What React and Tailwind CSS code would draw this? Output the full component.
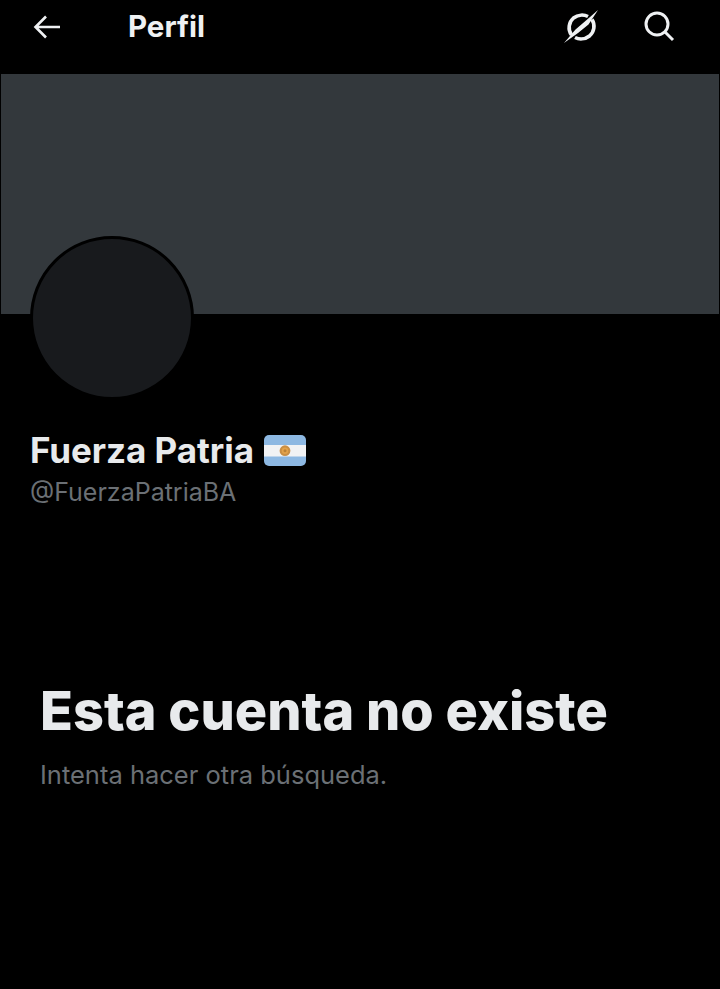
import React from "react";

const Flag = () => (
  <svg width="42" height="31" viewBox="0 0 42 31" className="block">
    <rect x="0" y="0" width="42" height="31" rx="5" fill="#8db8e2" />
    <rect x="0" y="10" width="42" height="11.5" fill="#f1f2f4" />
    <circle cx="21" cy="15.7" r="5.4" fill="#c98f45" />
    <circle cx="21" cy="15.7" r="3.2" fill="#e3a24a" />
    <circle cx="21" cy="15.7" r="1.5" fill="#bb8238" />
  </svg>
);

const App = () => {
  return (
    <div className="w-[720px] h-[989px] bg-black overflow-hidden font-['Inter',sans-serif]">
      <header className="h-[74px] flex items-start text-[#eff1f3]">
        <svg width="30" height="30" viewBox="0 0 30 30" className="ml-[32px] mt-[12px]" fill="none" stroke="currentColor" strokeWidth="2.6">
          <path d="M28 15H4M14 4.5 3.5 15 14 25.5" />
        </svg>
        <h1 className="ml-[66px] mt-[9px] text-[29.5px] leading-[34px] font-bold">Perfil</h1>
        <div className="ml-auto flex items-start">
          <svg width="36" height="36" viewBox="0 0 36 36" className="mt-[9px] mr-[43px]" fill="none" stroke="currentColor">
            <path d="M7.5 26C3.5 20.5 4.8 13 9.5 9 14 5.5 20 5.5 24 7.5" strokeWidth="3.6" />
            <path d="M28 10.5C31.5 16 30.2 23 25.5 27 21 30.5 15 30.5 11 28.5" strokeWidth="3.6" />
            <path d="M34 1 24.5 15.5 14 24 0 34 11.5 20.5 22 11.5Z" fill="currentColor" stroke="none" />
          </svg>
          <svg width="32" height="32" viewBox="0 0 32 32" className="mt-[10px] mr-[45px]" fill="none" stroke="currentColor" strokeWidth="3">
            <circle cx="14" cy="14" r="11" />
            <path d="m22 22 8 8" />
          </svg>
        </div>
      </header>

      <div className="h-[240px] mx-px bg-[#33383c]" />

      <div className="ml-[30px] -mt-[78px] w-[164px] h-[164px] rounded-full bg-[#181a1d] border-[3px] border-black" />

      <div className="ml-[30px] mt-[28px] flex items-center gap-[10px]">
        <span className="text-[35px] leading-[44px] font-bold text-[#e8eaec] tracking-[-0.05px]">Fuerza Patria</span>
        <Flag />
      </div>
      <p className="ml-[30px] mt-[3px] text-[25px] leading-[34px] text-[#6b7075]">@FuerzaPatriaBA</p>

      <h2 className="ml-[40px] mt-[171px] text-[54px] leading-[62px] font-extrabold text-[#e8eaec]">Esta cuenta no existe</h2>
      <p className="ml-[40px] mt-[16px] text-[25.5px] leading-[34px] text-[#6b7075]">Intenta hacer otra búsqueda.</p>
    </div>
  );
};

export default App;
